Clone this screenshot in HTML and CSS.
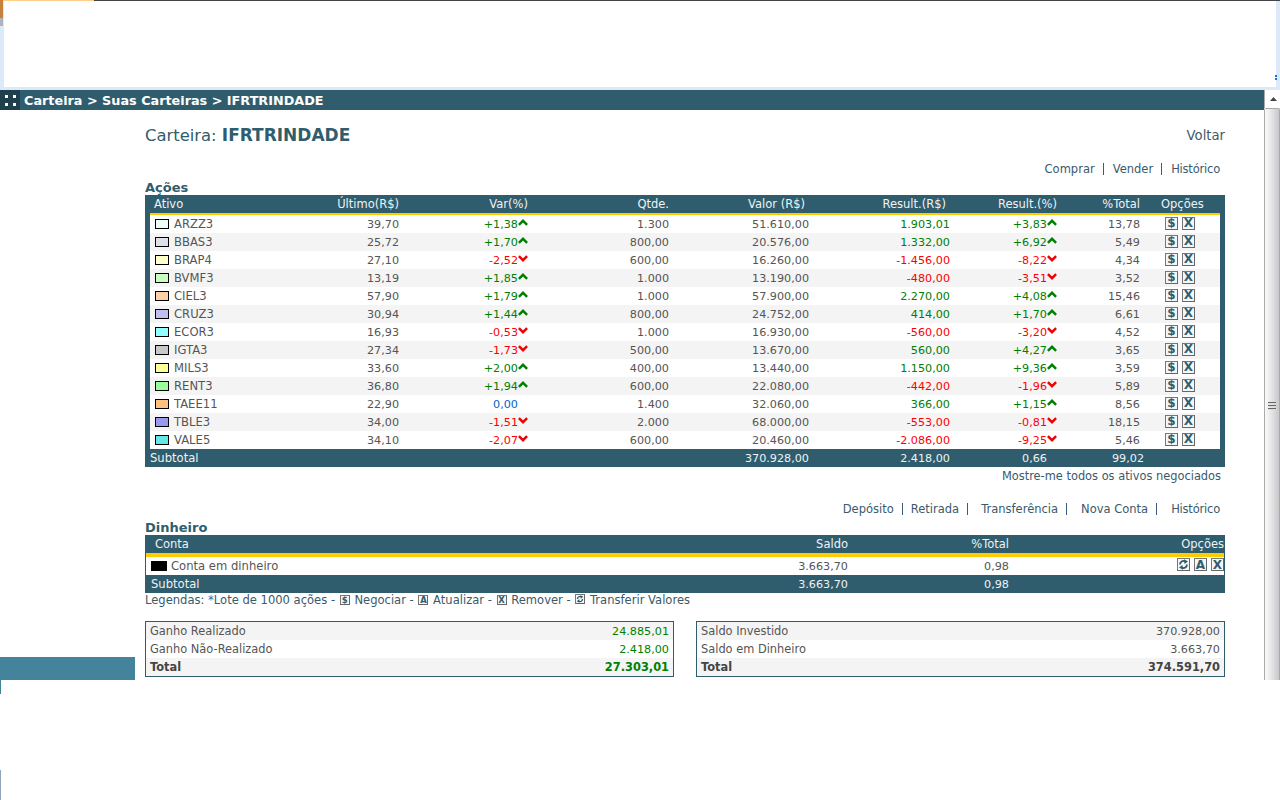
FILE: index.html
```html
<!DOCTYPE html>
<html lang="pt-BR">
<head>
<meta charset="utf-8">
<title>Carteira</title>
<link rel="stylesheet" href="styles.css">
</head>
<body>
<svg class="defs" width="0" height="0" aria-hidden="true">
  <symbol id="up" viewBox="0 0 9 6"><path d="M.8 5.2 4.5 1.5 8.2 5.2" fill="none" stroke="#008000" stroke-width="2.2"/></symbol>
  <symbol id="down" viewBox="0 0 9 6"><path d="M.8.8 4.5 4.5 8.2.8" fill="none" stroke="#f00000" stroke-width="2.2"/></symbol>
  <symbol id="refresh" viewBox="0 0 11 11"><path d="M2 5.5A3.5 3.5 0 0 1 7.2 2.4" fill="none" stroke="#305d6d" stroke-width="1.8"/><path d="M9 5.5A3.5 3.5 0 0 1 3.8 8.6" fill="none" stroke="#305d6d" stroke-width="1.8"/><path d="M6 .2 10 2.4 6.6 5Z" fill="#305d6d"/><path d="M5 10.8 1 8.6 4.4 6Z" fill="#305d6d"/></symbol>
</svg>
<div class="top"><div class="top-tab"></div><div class="top-line"></div><div class="top-edge"></div><div class="top-inner"></div><div class="top-dots"></div></div>
<div class="frame">
  <div class="page">
    <div class="titlebar"><span class="handle"><i></i><i></i><i></i><i></i></span><span>Carteira &gt; Suas Carteiras &gt; IFRTRINDADE</span></div>
    <div class="content">
      <div class="headline"><h1>Carteira: <b>IFRTRINDADE</b></h1><a class="back">Voltar</a></div>
      <div class="links first"><a>Comprar</a><i class="s9"></i><a>Vender</a><i class="s9"></i><a class="hist">Histórico</a></div>
      <h2 class="h-acoes">Ações</h2>
      <table class="tbl stocks">
        <colgroup><col class="c1"><col class="c2"><col class="c3"><col class="c4"><col class="c5"><col class="c6"><col class="c7"><col class="c8"><col class="c9"></colgroup>
        <thead><tr><th class="l">Ativo</th><th>Último(R$)</th><th>Var(%)</th><th>Qtde.</th><th class="p4">Valor (R$)</th><th class="p4">Result.(R$)</th><th>Result.(%)</th><th>%Total</th><th class="opt">Opções</th></tr></thead>
        <tbody>
          <tr><td class="l"><span class="sw" style="background:#eefff8"></span>ARZZ3</td><td>39,70</td><td class="g">+1,38<svg class="ar"><use href="#up"/></svg></td><td>1.300</td><td>51.610,00</td><td class="g">1.903,01</td><td class="g">+3,83<svg class="ar"><use href="#up"/></svg></td><td>13,78</td><td class="ops"><span class="ic">$</span><span class="ic">X</span></td></tr>
          <tr><td class="l"><span class="sw" style="background:#e0e0e8"></span>BBAS3</td><td>25,72</td><td class="g">+1,70<svg class="ar"><use href="#up"/></svg></td><td>800,00</td><td>20.576,00</td><td class="g">1.332,00</td><td class="g">+6,92<svg class="ar"><use href="#up"/></svg></td><td>5,49</td><td class="ops"><span class="ic">$</span><span class="ic">X</span></td></tr>
          <tr><td class="l"><span class="sw" style="background:#ffffc8"></span>BRAP4</td><td>27,10</td><td class="r">-2,52<svg class="ar"><use href="#down"/></svg></td><td>600,00</td><td>16.260,00</td><td class="r">-1.456,00</td><td class="r">-8,22<svg class="ar"><use href="#down"/></svg></td><td>4,34</td><td class="ops"><span class="ic">$</span><span class="ic">X</span></td></tr>
          <tr><td class="l"><span class="sw" style="background:#c8ffc0"></span>BVMF3</td><td>13,19</td><td class="g">+1,85<svg class="ar"><use href="#up"/></svg></td><td>1.000</td><td>13.190,00</td><td class="r">-480,00</td><td class="r">-3,51<svg class="ar"><use href="#down"/></svg></td><td>3,52</td><td class="ops"><span class="ic">$</span><span class="ic">X</span></td></tr>
          <tr><td class="l"><span class="sw" style="background:#ffd0a8"></span>CIEL3</td><td>57,90</td><td class="g">+1,79<svg class="ar"><use href="#up"/></svg></td><td>1.000</td><td>57.900,00</td><td class="g">2.270,00</td><td class="g">+4,08<svg class="ar"><use href="#up"/></svg></td><td>15,46</td><td class="ops"><span class="ic">$</span><span class="ic">X</span></td></tr>
          <tr><td class="l"><span class="sw" style="background:#c0c0f0"></span>CRUZ3</td><td>30,94</td><td class="g">+1,44<svg class="ar"><use href="#up"/></svg></td><td>800,00</td><td>24.752,00</td><td class="g">414,00</td><td class="g">+1,70<svg class="ar"><use href="#up"/></svg></td><td>6,61</td><td class="ops"><span class="ic">$</span><span class="ic">X</span></td></tr>
          <tr><td class="l"><span class="sw" style="background:#90ffff"></span>ECOR3</td><td>16,93</td><td class="r">-0,53<svg class="ar"><use href="#down"/></svg></td><td>1.000</td><td>16.930,00</td><td class="r">-560,00</td><td class="r">-3,20<svg class="ar"><use href="#down"/></svg></td><td>4,52</td><td class="ops"><span class="ic">$</span><span class="ic">X</span></td></tr>
          <tr><td class="l"><span class="sw" style="background:#c8c8c8"></span>IGTA3</td><td>27,34</td><td class="r">-1,73<svg class="ar"><use href="#down"/></svg></td><td>500,00</td><td>13.670,00</td><td class="g">560,00</td><td class="g">+4,27<svg class="ar"><use href="#up"/></svg></td><td>3,65</td><td class="ops"><span class="ic">$</span><span class="ic">X</span></td></tr>
          <tr><td class="l"><span class="sw" style="background:#ffff99"></span>MILS3</td><td>33,60</td><td class="g">+2,00<svg class="ar"><use href="#up"/></svg></td><td>400,00</td><td>13.440,00</td><td class="g">1.150,00</td><td class="g">+9,36<svg class="ar"><use href="#up"/></svg></td><td>3,59</td><td class="ops"><span class="ic">$</span><span class="ic">X</span></td></tr>
          <tr><td class="l"><span class="sw" style="background:#99ff99"></span>RENT3</td><td>36,80</td><td class="g">+1,94<svg class="ar"><use href="#up"/></svg></td><td>600,00</td><td>22.080,00</td><td class="r">-442,00</td><td class="r">-1,96<svg class="ar"><use href="#down"/></svg></td><td>5,89</td><td class="ops"><span class="ic">$</span><span class="ic">X</span></td></tr>
          <tr><td class="l"><span class="sw" style="background:#ffc080"></span>TAEE11</td><td>22,90</td><td class="b">0,00<span class="noar"></span></td><td>1.400</td><td>32.060,00</td><td class="g">366,00</td><td class="g">+1,15<svg class="ar"><use href="#up"/></svg></td><td>8,56</td><td class="ops"><span class="ic">$</span><span class="ic">X</span></td></tr>
          <tr><td class="l"><span class="sw" style="background:#9999ee"></span>TBLE3</td><td>34,00</td><td class="r">-1,51<svg class="ar"><use href="#down"/></svg></td><td>2.000</td><td>68.000,00</td><td class="r">-553,00</td><td class="r">-0,81<svg class="ar"><use href="#down"/></svg></td><td>18,15</td><td class="ops"><span class="ic">$</span><span class="ic">X</span></td></tr>
          <tr><td class="l"><span class="sw" style="background:#66e6e6"></span>VALE5</td><td>34,10</td><td class="r">-2,07<svg class="ar"><use href="#down"/></svg></td><td>600,00</td><td>20.460,00</td><td class="r">-2.086,00</td><td class="r">-9,25<svg class="ar"><use href="#down"/></svg></td><td>5,46</td><td class="ops"><span class="ic">$</span><span class="ic">X</span></td></tr>
        </tbody>
        <tfoot><tr><td class="sub" colspan="4">Subtotal</td><td>370.928,00</td><td>2.418,00</td><td class="p10">0,66</td><td class="p-4">99,02</td><td></td></tr></tfoot>
      </table>
      <div class="more"><a>Mostre-me todos os ativos negociados</a></div>
      <div class="links second"><a>Depósito</a><i class="s8"></i><a>Retirada</a><i class="s12"></i><a>Transferência</a><i class="s13"></i><a>Nova Conta</a><i class="s13"></i><a class="hist">Histórico</a></div>
      <h2 class="h-din">Dinheiro</h2>
      <table class="tbl cash">
        <colgroup><col class="d1"><col class="d2"><col class="d3"><col class="d4"></colgroup>
        <thead><tr><th class="lc">Conta</th><th>Saldo</th><th>%Total</th><th>Opções</th></tr></thead>
        <tbody><tr><td class="l"><span class="swk"></span>Conta em dinheiro</td><td>3.663,70</td><td>0,98</td><td class="ops2"><span class="ic"><svg class="rf"><use href="#refresh"/></svg></span><span class="ic">A</span><span class="ic">X</span></td></tr></tbody>
        <tfoot><tr><td class="sub2">Subtotal</td><td>3.663,70</td><td>0,98</td><td></td></tr></tfoot>
      </table>
      <div class="legend">Legendas: <em>*</em>Lote de 1000 ações - <span class="ic sm">$</span> Negociar - <span class="ic sm">A</span> Atualizar - <span class="ic sm">X</span> Remover - <span class="ic sm"><svg class="rf"><use href="#refresh"/></svg></span> Transferir Valores</div>
      <div class="boxes">
        <div class="box">
          <div class="bx alt"><span>Ganho Realizado</span><span class="g val">24.885,01</span></div>
          <div class="bx"><span>Ganho Não-Realizado</span><span class="g val">2.418,00</span></div>
          <div class="bx alt strong"><span>Total</span><span class="g">27.303,01</span></div>
        </div>
        <div class="box">
          <div class="bx alt"><span>Saldo Investido</span><span class="val">370.928,00</span></div>
          <div class="bx"><span>Saldo em Dinheiro</span><span class="val">3.663,70</span></div>
          <div class="bx alt strong"><span>Total</span><span>374.591,70</span></div>
        </div>
      </div>
    </div>
    <div class="sideblock"></div>
  </div>
  <div class="scroll"><div class="sb-btn"><svg width="7" height="4" viewBox="0 0 7 4"><path d="M3.5 0 7 4H0Z" fill="#444"/></svg></div><div class="sb-thumb"><i></i><i></i><i></i></div></div>
</div>
<div class="bottom"><div class="b-strip"></div><div class="b-strip2"></div></div>
</body>
</html>
```
FILE: styles.css
```css
* { box-sizing: border-box; }
html, body { margin: 0; padding: 0; }
body { width: 1280px; height: 800px; overflow: hidden; background: #fff; font-family: "DejaVu Sans", Verdana, sans-serif; font-size: 11px; color: #555; }
.defs { position: absolute; }
a { color: inherit; text-decoration: none; }

.top { position: relative; height: 90px; background: #dce9f8; }
.top-inner { position: absolute; left: 4px; right: 4px; top: 1px; height: 86px; background: #fff; }
.top-line { position: absolute; left: 94px; right: 0; top: 0; height: 1px; background: #444; z-index: 1; }
.top-tab { position: absolute; left: 0; top: 0; width: 94px; height: 1px; background: #ffcf8a; z-index: 1; }
.top-edge { position: absolute; left: 0; top: 0; width: 3px; height: 26px; background: linear-gradient(#c8803a 0 18px, #b0b4ba 18px); z-index: 1; }
.top-dots { position: absolute; right: 3px; top: 75px; width: 2px; height: 5px; background: linear-gradient(#1f6fd0 0 2px, transparent 2px 3px, #1f6fd0 3px); z-index: 1; }

.frame { display: flex; height: 590px; }
.page { position: relative; width: 1264px; }
.titlebar { display: flex; align-items: center; height: 20px; background: #305d6d; color: #fff; font-weight: bold; font-size: 12.8px; }
.handle { display: grid; grid-template-columns: 3px 3px; grid-auto-rows: 3px; gap: 5px 5px; align-content: center; justify-content: center; width: 20px; height: 20px; background: #1f3f4c; margin-right: 4px; }
.handle i { background: #fff; }

.content { padding-left: 145px; width: 1225px; }
.headline { display: flex; justify-content: space-between; align-items: center; height: 30px; margin-top: 10px; color: #305d6d; }
h1 { margin: 0; font-size: 16.4px; font-weight: normal; color: #305d6d; }
h1 b { font-size: 17px; }
.back { font-size: 13.2px; color: #3f5a68; }
.links { display: flex; justify-content: flex-end; align-items: center; height: 14px; padding-right: 5px; color: #3a5a6b; font-size: 11.5px; }
.links.first { margin-top: 12px; }
.links .hist { letter-spacing: -0.2px; }
.links i { width: 1px; height: 12px; background: #3a5a80; }
.s9 { margin: 0 9px 0 8px; }
.s8 { margin: 0 8px; }
.s12 { margin: 0 13px 0 8px; }
.s13 { margin: 0 14px 0 8px; }
h2 { margin: 0; font-size: 13px; line-height: 14px; color: #305d6d; font-weight: bold; }
.h-acoes { margin-top: 5px; height: 14px; }

.tbl { border-collapse: separate; border-spacing: 0; table-layout: fixed; background: #305d6d; }
.stocks { width: 1080px; padding: 0; border-left: 5px solid #305d6d; border-right: 5px solid #305d6d; }
.c1 { width: 150px; } .c2 { width: 99px; } .c3 { width: 129px; } .c4 { width: 141px; } .c5 { width: 140px; } .c6 { width: 141px; } .c7 { width: 107px; } .c8 { width: 83px; } .c9 { width: 80px; }
.tbl th { height: 18px; padding: 0; font-weight: normal; color: #eef3f5; text-align: right; font-size: 11.5px; white-space: nowrap; }
.stocks thead tr th { border-bottom: 2px solid #fc0; height: 20px; }
.tbl th.l { text-align: left; padding-left: 4px; }
.tbl th.p4 { padding-right: 4px; }
.tbl th.opt { text-align: left; padding-left: 21px; }
.tbl td { height: 18px; padding: 0; background: #fff; text-align: right; color: #555; font-size: 11.2px; white-space: nowrap; }
.stocks tbody tr:nth-child(even) td { background: #f4f4f4; }
.tbl tfoot td { background: #305d6d; color: #eef3f5; }
.tbl td.l { text-align: left; font-size: 11.6px; }
.tbl td.g { color: #008000; } .tbl td.r { color: #f00; } .tbl td.b { color: #06c; }
.g { color: #008000; }
.tbl td.sub { text-align: left; font-size: 11.6px; }
.tbl td.p10 { padding-right: 10px; }
.p-4 { position: relative; left: 4px; }
.sw { display: inline-block; width: 14px; height: 10px; border: 1px solid #000; margin: 0 5px 0 5px; vertical-align: -1px; }
.swk { display: inline-block; width: 16px; height: 10px; background: #000; margin: 0 4px 0 5px; vertical-align: -1px; }
.ar { width: 10px; height: 7px; margin-bottom: 5px; vertical-align: middle; }
.noar { display: inline-block; width: 10px; }
.tbl td.ops { text-align: left; padding-left: 25px; line-height: 0; }
.ic { display: inline-flex; align-items: center; justify-content: center; width: 13px; height: 13px; border: 1px solid #777; border-right-color: #666; border-bottom-color: #666; background: #f4f6f7; color: #305d6d; font: bold 12px/1 "DejaVu Sans", sans-serif; vertical-align: top; overflow: hidden; }
.ops .ic { margin: 0 4px 2px 0; }
.rf { width: 11px; height: 11px; flex: none; }
.more { text-align: right; height: 18px; line-height: 18px; padding-right: 4px; color: #3a5a6b; font-size: 11.4px; }
.links.second { margin-top: 17px; }
.h-din { margin-top: 6px; height: 13px; line-height: 12px; }
.cash { width: 1080px; border-left: 1px solid #305d6d; border-right: 1px solid #305d6d; }
.d1 { width: 541px; } .d2 { width: 161px; } .d3 { width: 161px; } .d4 { width: 215px; }
.cash thead th { border-bottom: 4px solid #fc0; height: 22px; }
.tbl th.lc { text-align: left; padding-left: 9px; }
.tbl td.sub2 { text-align: left; padding-left: 5px; font-size: 11.6px; }
.ops2 { line-height: 0; vertical-align: top; }
.ops2 .ic { margin: 1px 0 0 4px; }
.legend { height: 14px; margin-top: 0; line-height: 14px; color: #3a5a6b; font-size: 11.55px; white-space: nowrap; }
.legend em { font-style: normal; color: #0a7ac0; }
.ic.sm { width: 10px; height: 10px; font-size: 8.5px; margin: 0 1px; vertical-align: 1px; }
.ic.sm .rf { width: 8px; height: 8px; }
.boxes { display: flex; justify-content: space-between; margin-top: 14px; }
.box { width: 529px; height: 56px; border: 1px solid #305d6d; background: #fff; }
.bx { display: flex; justify-content: space-between; align-items: center; height: 18px; padding: 0 4px; font-size: 11.4px; color: #555; }
.bx .val { font-size: 11.2px; }
.bx.alt { background: #f4f4f4; }
.bx.strong { font-weight: bold; color: #444; font-size: 11.4px; }
.sideblock { position: absolute; left: 0; bottom: 0; width: 135px; height: 23px; background: #43839b; }

.scroll { width: 16px; background: #fff; }
.sb-btn { display: flex; align-items: center; justify-content: center; height: 18px; background: #fff; border-left: 1px solid #aaa; padding-left: 1px; }
.sb-thumb { display: flex; flex-direction: column; align-items: center; gap: 1px; height: 572px; padding-top: 293px; border: 1px solid #aaa; border-bottom: 0; border-radius: 2px 2px 0 0; background: linear-gradient(90deg, #fafafa, #e8e8e8 40%, #c8c8cc); }
.sb-thumb i { width: 8px; height: 1px; background: #666; box-shadow: 0 1px 0 #ddd; margin-bottom: 1px; }

.bottom { position: relative; height: 120px; background: #fff; }
.b-strip { position: absolute; left: 0; top: 0; width: 1px; height: 14px; background: #43839b; }
.b-strip2 { position: absolute; left: 0; top: 90px; width: 1px; height: 30px; background: #8fa3bd; }
```
